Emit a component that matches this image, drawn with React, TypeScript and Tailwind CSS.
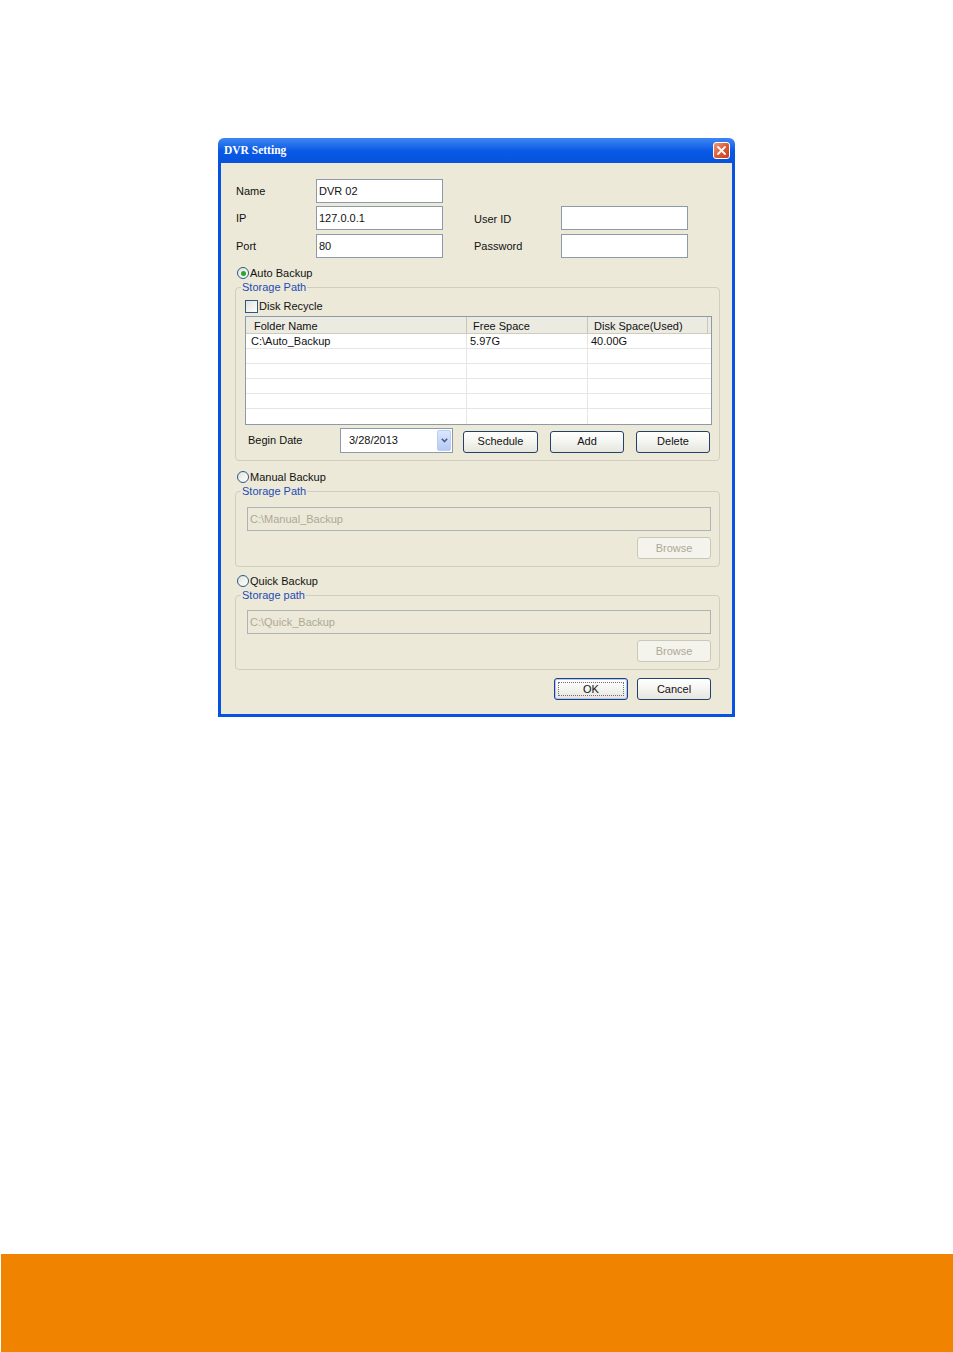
import React from "react";

const F = "font-['Liberation_Sans',Arial,sans-serif]";

function TextBox({ value = "", className = "", disabled = false }: { value?: string; className?: string; disabled?: boolean }) {
  return (
    <div
      className={`h-[24px] flex items-center pl-[2px] text-[11px] leading-none ${
        disabled ? "border border-[#b0b3b6] bg-[#ece9d8] text-[#aca899]" : "border border-[#8d9aaa] bg-white text-[#111]"
      } ${className}`}
    >
      {value}
    </div>
  );
}

function Radio({ checked = false }: { checked?: boolean }) {
  return (
    <span className="w-[12px] h-[12px] rounded-full border border-[#2c5a84] bg-gradient-to-br from-[#e2e2dc] to-white flex items-center justify-center shrink-0">
      {checked && <span className="w-[5px] h-[5px] rounded-full bg-[#2aa52a]" />}
    </span>
  );
}

function Btn({
  label,
  className = "",
  disabled = false,
  focus = false,
}: {
  label: string;
  className?: string;
  disabled?: boolean;
  focus?: boolean;
}) {
  return (
    <div
      className={`relative h-[22px] rounded-[3px] flex items-center justify-center text-[11px] leading-none ${
        disabled
          ? "border border-[#cac8bb] bg-[#f5f4ec] text-[#aca899]"
          : focus
          ? "border border-[#1f3f8a] bg-gradient-to-b from-white via-[#f4f4f0] to-[#e6e5dd] text-[#111] shadow-[inset_0_0_0_1px_#b3c7f0]"
          : "border border-[#23416a] bg-gradient-to-b from-white via-[#f4f4f0] to-[#e6e5dd] text-[#111]"
      } ${className}`}
    >
      {focus && <span className="absolute inset-[3px] border border-dotted border-[#707070]" />}
      {label}
    </div>
  );
}

function GroupBox({ title, children, className = "" }: { title: string; children: React.ReactNode; className?: string }) {
  return (
    <fieldset className={`ml-[14px] mr-[12px] border border-[#d0cebf] rounded-[4px] ${className}`}>
      <legend className="ml-[5px] px-[1px] text-[11px] leading-[13px] text-[#1e4bb4]">{title}</legend>
      {children}
    </fieldset>
  );
}

export default function App() {
  const emptyRows = [0, 1, 2, 3, 4];
  return (
    <div className={`w-[953px] h-[1352px] bg-white flex flex-col ${F}`}>
      {/* Dialog */}
      <div className="mt-[138px] ml-[218px] w-[517px] h-[579px] flex flex-col rounded-t-[6px] overflow-hidden">
        {/* Title bar */}
        <div className="h-[25px] flex items-center justify-between pl-[6px] pr-[5px] bg-gradient-to-b from-[#3d87f2] via-[#0a5ae6] to-[#0653dc]">
          <span className="text-white text-[11.5px] font-bold font-['Liberation_Serif','Times_New_Roman',serif] leading-none">
            DVR Setting
          </span>
          <div className="w-[17px] h-[17px] rounded-[3px] border border-white bg-gradient-to-br from-[#ee9a7e] via-[#dd5b35] to-[#c2401b] flex items-center justify-center">
            <svg width="11" height="11" viewBox="0 0 11 11">
              <path d="M2 2 L9 9 M9 2 L2 9" stroke="white" strokeWidth="1.8" strokeLinecap="round" />
            </svg>
          </div>
        </div>

        {/* Body */}
        <div className="flex-1 flex flex-col bg-[#ece9d8] border-x-[3px] border-b-[3px] border-[#0752e0] text-[11px] text-[#111]">
          {/* Top fields */}
          <div className="mt-[16px] h-[24px] flex items-center">
            <span className="ml-[15px] w-[80px]">Name</span>
            <TextBox value="DVR 02" className="w-[127px]" />
          </div>
          <div className="mt-[3px] h-[24px] flex items-center">
            <span className="ml-[15px] w-[80px]">IP</span>
            <TextBox value="127.0.0.1" className="w-[127px]" />
            <span className="ml-[31px] w-[87px] pt-[3px]">User ID</span>
            <TextBox className="w-[127px]" />
          </div>
          <div className="mt-[4px] h-[24px] flex items-center">
            <span className="ml-[15px] w-[80px]">Port</span>
            <TextBox value="80" className="w-[127px]" />
            <span className="ml-[31px] w-[87px]">Password</span>
            <TextBox className="w-[127px]" />
          </div>

          {/* Auto Backup */}
          <div className="mt-[8px] h-[14px] flex items-center ml-[16px] gap-[1px]">
            <Radio checked />
            <span>Auto Backup</span>
          </div>
          <GroupBox title="Storage Path" className="mt-[1px]">
            <div className="pl-[9px] pr-[7px] pb-[7px]">
              <div className="mt-[6px] h-[13px] flex items-center">
                <span className="w-[13px] h-[13px] border border-[#2c5a84] bg-gradient-to-br from-[#e2e2dc] to-white shrink-0" />
                <span className="ml-[1px]">Disk Recycle</span>
              </div>
              {/* List */}
              <div className="mt-[3px] w-[467px] border border-[#8d9aaa] bg-white">
                <div className="flex h-[17px] bg-[#ecebe2] border-b border-[#d0ccbb]">
                  <div className="w-[221px] border-r border-[#c9c6b6] pl-[8px] pt-[2px] flex items-center">Folder Name</div>
                  <div className="w-[121px] border-r border-[#c9c6b6] pl-[6px] pt-[2px] flex items-center">Free Space</div>
                  <div className="w-[120px] border-r border-[#c9c6b6] pl-[6px] pt-[2px] flex items-center">Disk Space(Used)</div>
                  <div className="flex-1" />
                </div>
                <div className="flex h-[15px] border-b border-[#e6e6e6]">
                  <div className="w-[221px] border-r border-[#e6e6e6] pl-[5px] pt-[1px] flex items-center">{"C:\\Auto_Backup"}</div>
                  <div className="w-[121px] border-r border-[#e6e6e6] pl-[3px] pt-[1px] flex items-center">5.97G</div>
                  <div className="w-[120px] pl-[3px] pt-[1px] flex items-center">40.00G</div>
                </div>
                {emptyRows.map((r) => (
                  <div key={r} className="flex h-[15px] border-b border-[#e6e6e6] last:border-b-0">
                    <div className="w-[221px] border-r border-[#e6e6e6]" />
                    <div className="w-[121px] border-r border-[#e6e6e6]" />
                    <div className="w-[120px]" />
                  </div>
                ))}
              </div>
              {/* Begin date row */}
              <div className="mt-[3px] h-[25px] flex items-center">
                <span className="pl-[3px] w-[95px]">Begin Date</span>
                <div className="w-[113px] h-[25px] border border-[#8d9aaa] bg-white flex items-center">
                  <span className="pl-[8px] flex-1 leading-none">3/28/2013</span>
                  <div className="w-[14px] h-[21px] mr-[1px] rounded-[2px] bg-gradient-to-b from-[#dce7ff] to-[#b6c9f5] border border-[#bccdf6] flex items-center justify-center">
                    <svg width="7" height="5" viewBox="0 0 7 5">
                      <path d="M0.8 0.8 L3.5 3.6 L6.2 0.8" stroke="#4b5f86" strokeWidth="1.6" fill="none" />
                    </svg>
                  </div>
                </div>
                <Btn label="Schedule" className="ml-[10px] w-[75px] mt-[2px]" />
                <Btn label="Add" className="ml-[12px] w-[74px] mt-[2px]" />
                <Btn label="Delete" className="ml-[12px] w-[74px] mt-[2px]" />
              </div>
            </div>
          </GroupBox>

          {/* Manual Backup */}
          <div className="mt-[9px] h-[14px] flex items-center ml-[16px] gap-[1px]">
            <Radio />
            <span>Manual Backup</span>
          </div>
          <GroupBox title="Storage Path" className="mt-[1px]">
            <div className="pl-[11px] pr-[8px] pb-[7px] flex flex-col">
              <TextBox value={"C:\\Manual_Backup"} disabled className="mt-[9px] w-[464px]" />
              <Btn label="Browse" disabled className="mt-[6px] w-[74px] self-end" />
            </div>
          </GroupBox>

          {/* Quick Backup */}
          <div className="mt-[7px] h-[14px] flex items-center ml-[16px] gap-[1px]">
            <Radio />
            <span>Quick Backup</span>
          </div>
          <GroupBox title="Storage path" className="mt-[1px]">
            <div className="pl-[11px] pr-[8px] pb-[7px] flex flex-col">
              <TextBox value={"C:\\Quick_Backup"} disabled className="mt-[8px] w-[464px]" />
              <Btn label="Browse" disabled className="mt-[6px] w-[74px] self-end" />
            </div>
          </GroupBox>

          {/* OK / Cancel */}
          <div className="mt-[8px] flex justify-end pr-[21px] gap-[9px]">
            <Btn label="OK" focus className="w-[74px]" />
            <Btn label="Cancel" className="w-[74px]" />
          </div>
        </div>
      </div>

      {/* Orange footer */}
      <div className="mt-auto ml-[1px] h-[98px] bg-[#f08300]" />
    </div>
  );
}
